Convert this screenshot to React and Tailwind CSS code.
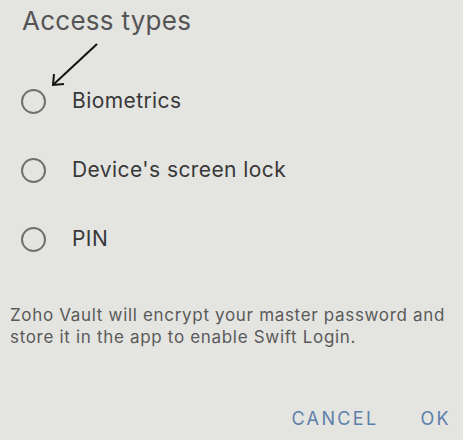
export default function App() {
  const options = ["Biometrics", "Device's screen lock", "PIN"];
  return (
    <div
      className="w-[463px] h-[440px] overflow-hidden bg-[#e4e4e1] text-[#3a3a3a]"
      style={{ fontFamily: "Inter, 'Noto Sans', sans-serif" }}
    >
      <div className="relative pl-[22px] pt-[3px]">
        <h1 className="text-[26px] leading-[36px] text-[#555] font-normal tracking-[0.01em]">Access types</h1>
        <svg className="absolute left-[48px] top-[40px]" width="54" height="50" viewBox="0 0 54 50">
          <path d="M49 4 L6 44" stroke="#111" strokeWidth="2" fill="none" />
          <path d="M6 34 L5 45 L16 44" stroke="#111" strokeWidth="2" fill="none" />
        </svg>
      </div>
      <div className="flex flex-col gap-[43px] mt-[49px] pl-[21px]">
        {options.map((o) => (
          <label key={o} className="flex items-center h-[26px]">
            <span className="w-[25px] h-[25px] rounded-full border-[2.5px] border-[#707070]" />
            <span className="ml-[26px] text-[21px] tracking-[0.02em] text-[#383838]">{o}</span>
          </label>
        ))}
      </div>
      <p className="mt-[52px] px-[10px] text-[17px] leading-[22px] tracking-[0.04em] text-[#5a5a5a]">
        Zoho Vault will encrypt your master password and store it in the app to enable Swift Login.
      </p>
      <div className="flex justify-end gap-[42px] pr-[12px] mt-[57px]">
        <button className="text-[18px] tracking-[0.13em] text-[#5d80aa]">CANCEL</button>
        <button className="text-[18px] tracking-[0.13em] text-[#5d80aa]">OK</button>
      </div>
    </div>
  );
}
